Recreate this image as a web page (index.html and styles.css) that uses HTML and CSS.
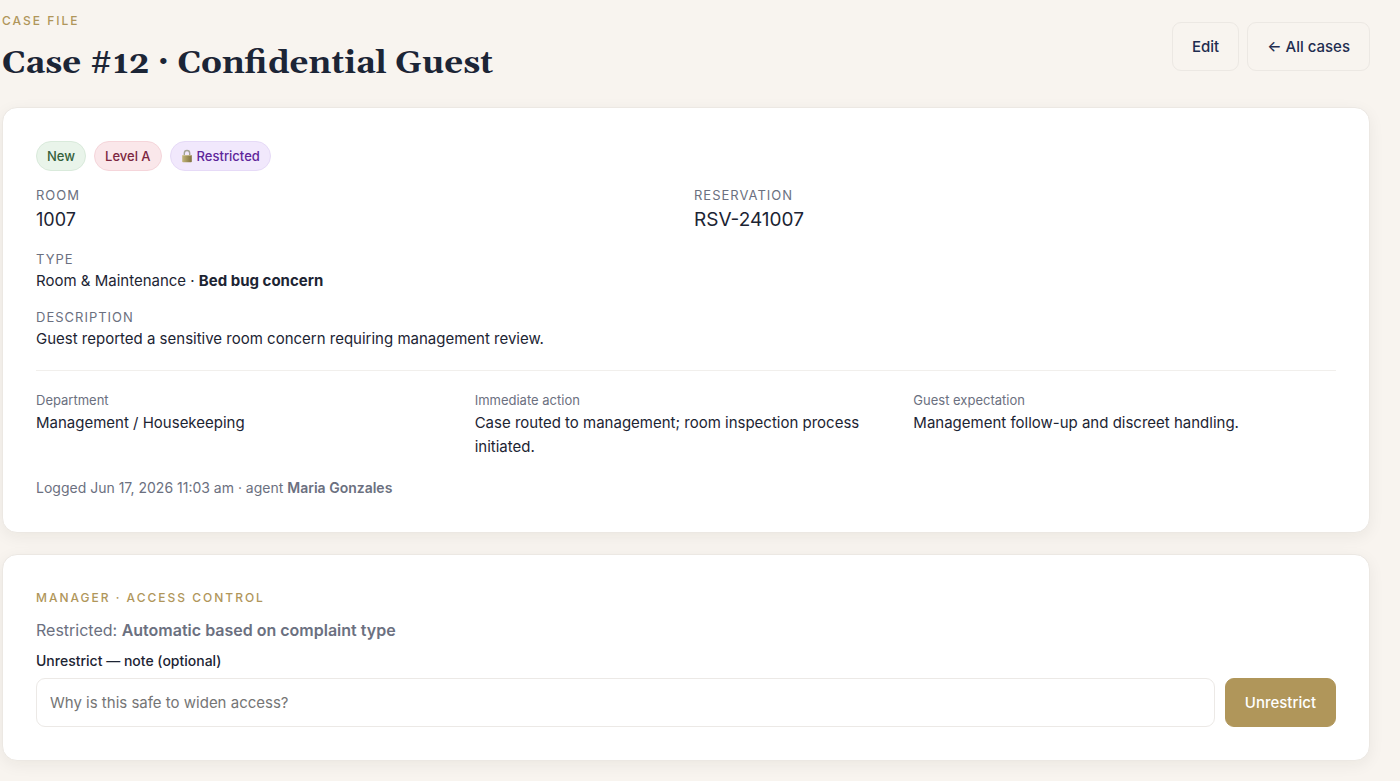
FILE: index.html
```html
<!DOCTYPE html>
<html lang="en">
<head>
<meta charset="utf-8">
<title>Case #12 · Confidential Guest</title>
<link rel="stylesheet" href="styles.css">
</head>
<body>
<main class="page">
  <header class="head">
    <div>
      <p class="eyebrow">Case file</p>
      <h1 class="title">Case #12 · Confidential Guest</h1>
    </div>
    <nav class="actions">
      <button type="button" class="btn">Edit</button>
      <a href="#" class="btn">← All cases</a>
    </nav>
  </header>

  <section class="card">
    <div class="badges">
      <span class="badge badge-new">New</span>
      <span class="badge badge-level">Level A</span>
      <span class="badge badge-lock">
        <svg class="lock" viewBox="0 0 12 14" aria-hidden="true">
          <defs>
            <linearGradient id="brass" x1="0" x2="1" y1="0" y2="0">
              <stop offset="0" stop-color="#c3b67c"/>
              <stop offset=".5" stop-color="#a0935a"/>
              <stop offset="1" stop-color="#80723f"/>
            </linearGradient>
          </defs>
          <path d="M3.300 7V4.200a2.700 2.700 0 0 1 5.400 0V7" fill="none" stroke="#a3a394" stroke-width="1.400"/>
          <rect x="1.200" y="6" width="9.600" height="7.200" rx=".8" fill="url(#brass)"/>
          <path d="M1.800 6.500h8.400" stroke="#d8cfa6" stroke-width=".6"/>
        </svg>Restricted</span>
    </div>
    <div class="pair">
      <div><div class="label">Room</div><div class="big">1007</div></div>
      <div><div class="label">Reservation</div><div class="big code">RSV-241007</div></div>
    </div>
    <div class="field"><div class="label">Type</div><div class="value">Room &amp; Maintenance · <strong>Bed bug concern</strong></div></div>
    <div class="field"><div class="label">Description</div><div class="value">Guest reported a sensitive room concern requiring management review.</div></div>
    <hr class="rule">
    <div class="trio">
      <div><div class="small">Department</div><div class="value">Management / Housekeeping</div></div>
      <div><div class="small">Immediate action</div><div class="value">Case routed to management; room inspection process initiated.</div></div>
      <div><div class="small">Guest expectation</div><div class="value">Management follow-up and discreet handling.</div></div>
    </div>
    <p class="logged">Logged Jun 17, 2026 11:03 am · agent <strong>Maria Gonzales</strong></p>
  </section>

  <section class="card">
    <h2 class="eyebrow">Manager · Access control</h2>
    <p class="reason">Restricted: <strong>Automatic based on complaint type</strong></p>
    <form>
      <label class="form-label" for="note">Unrestrict — note (optional)</label>
      <div class="row">
        <input class="input" id="note" type="text" placeholder="Why is this safe to widen access?">
        <button type="button" class="btn btn-gold">Unrestrict</button>
      </div>
    </form>
  </section>
</main>
</body>
</html>
```

FILE: styles.css
```css
* { box-sizing: border-box; }
body {
  margin: 0;
  background: #f8f4ef;
  color: #1c2433;
  font: 15px/24px Inter, sans-serif;
}
p, h1, h2 { margin: 0; }
.page { padding: 11px 30px 20px 2px; }
.head { display: flex; justify-content: space-between; align-items: flex-start; }
.eyebrow {
  color: #b0965a;
  font-size: 12px;
  line-height: 20px;
  font-weight: 500;
  letter-spacing: 2px;
  text-transform: uppercase;
}
.title {
  margin-top: 8px;
  font: 700 33px/48px Georgia, Gelasio, "Liberation Serif", serif;
  color: #1c2536;
}
.actions { display: flex; gap: 8px; padding-top: 11px; }
.btn {
  display: flex;
  align-items: center;
  height: 49px;
  padding: 0 19px;
  border: 1px solid #ece8e3;
  border-radius: 9px;
  background: transparent;
  color: #1f2d50;
  font: 500 15px/24px Inter, sans-serif;
  text-decoration: none;
}
.card {
  margin-top: 21px;
  padding: 33px;
  background: #fff;
  border: 1px solid #ece8e3;
  border-radius: 15px;
  box-shadow: 0 4px 16px rgba(40, 35, 25, .06);
}
.head + .card { margin-top: 20px; }
.badges { display: flex; gap: 8px; margin-bottom: 14px; }
.badge {
  display: flex;
  align-items: center;
  height: 30px;
  padding: 0 10px;
  border: 1px solid;
  border-radius: 15px;
  font-size: 13px;
  font-weight: 500;
}
.badge-new { color: #35613b; background: #e9f4ea; border-color: #d9eadb; }
.badge-level { color: #7c2640; background: #fae7ea; border-color: #f5d5da; }
.badge-lock { color: #5e259a; background: #f1e8fc; border-color: #e6daf7; }
.lock { width: 12px; height: 14px; margin-right: 4px; }
.pair { display: grid; grid-template-columns: 1fr 1fr; gap: 16px; }
.label {
  color: #6b7080;
  font-size: 13px;
  line-height: 20px;
  letter-spacing: 1px;
  text-transform: uppercase;
}
.big { font-size: 18px; line-height: 30px; }
.code { font-size: 19px; }
.field { margin-top: 14px; }
strong { font-weight: 700; }
.rule { margin: 19px 0 18px; border: 0; border-top: 1px solid #f1efec; }
.trio { display: grid; grid-template-columns: repeat(3, 1fr); gap: 16px; }
.small { color: #6b7080; font-size: 13px; line-height: 22px; }
.logged { margin-top: 18px; color: #6b7080; font-size: 14px; line-height: 22px; }
.logged strong, .reason strong { font-weight: 600; }
.reason { margin-top: 10px; color: #6b7080; font-size: 16px; }
.form-label { display: block; margin-top: 7px; font-size: 14px; font-weight: 500; }
.row { display: flex; gap: 10px; margin-top: 5px; }
.input {
  flex: 1;
  min-width: 0;
  height: 49px;
  padding: 0 13px;
  border: 1px solid #ece9e6;
  border-radius: 9px;
  font: 15px/24px Inter, sans-serif;
}
.input::placeholder { color: #757575; }
.btn-gold { background: #b0965a; border-color: #b0965a; color: #fff; }
```
